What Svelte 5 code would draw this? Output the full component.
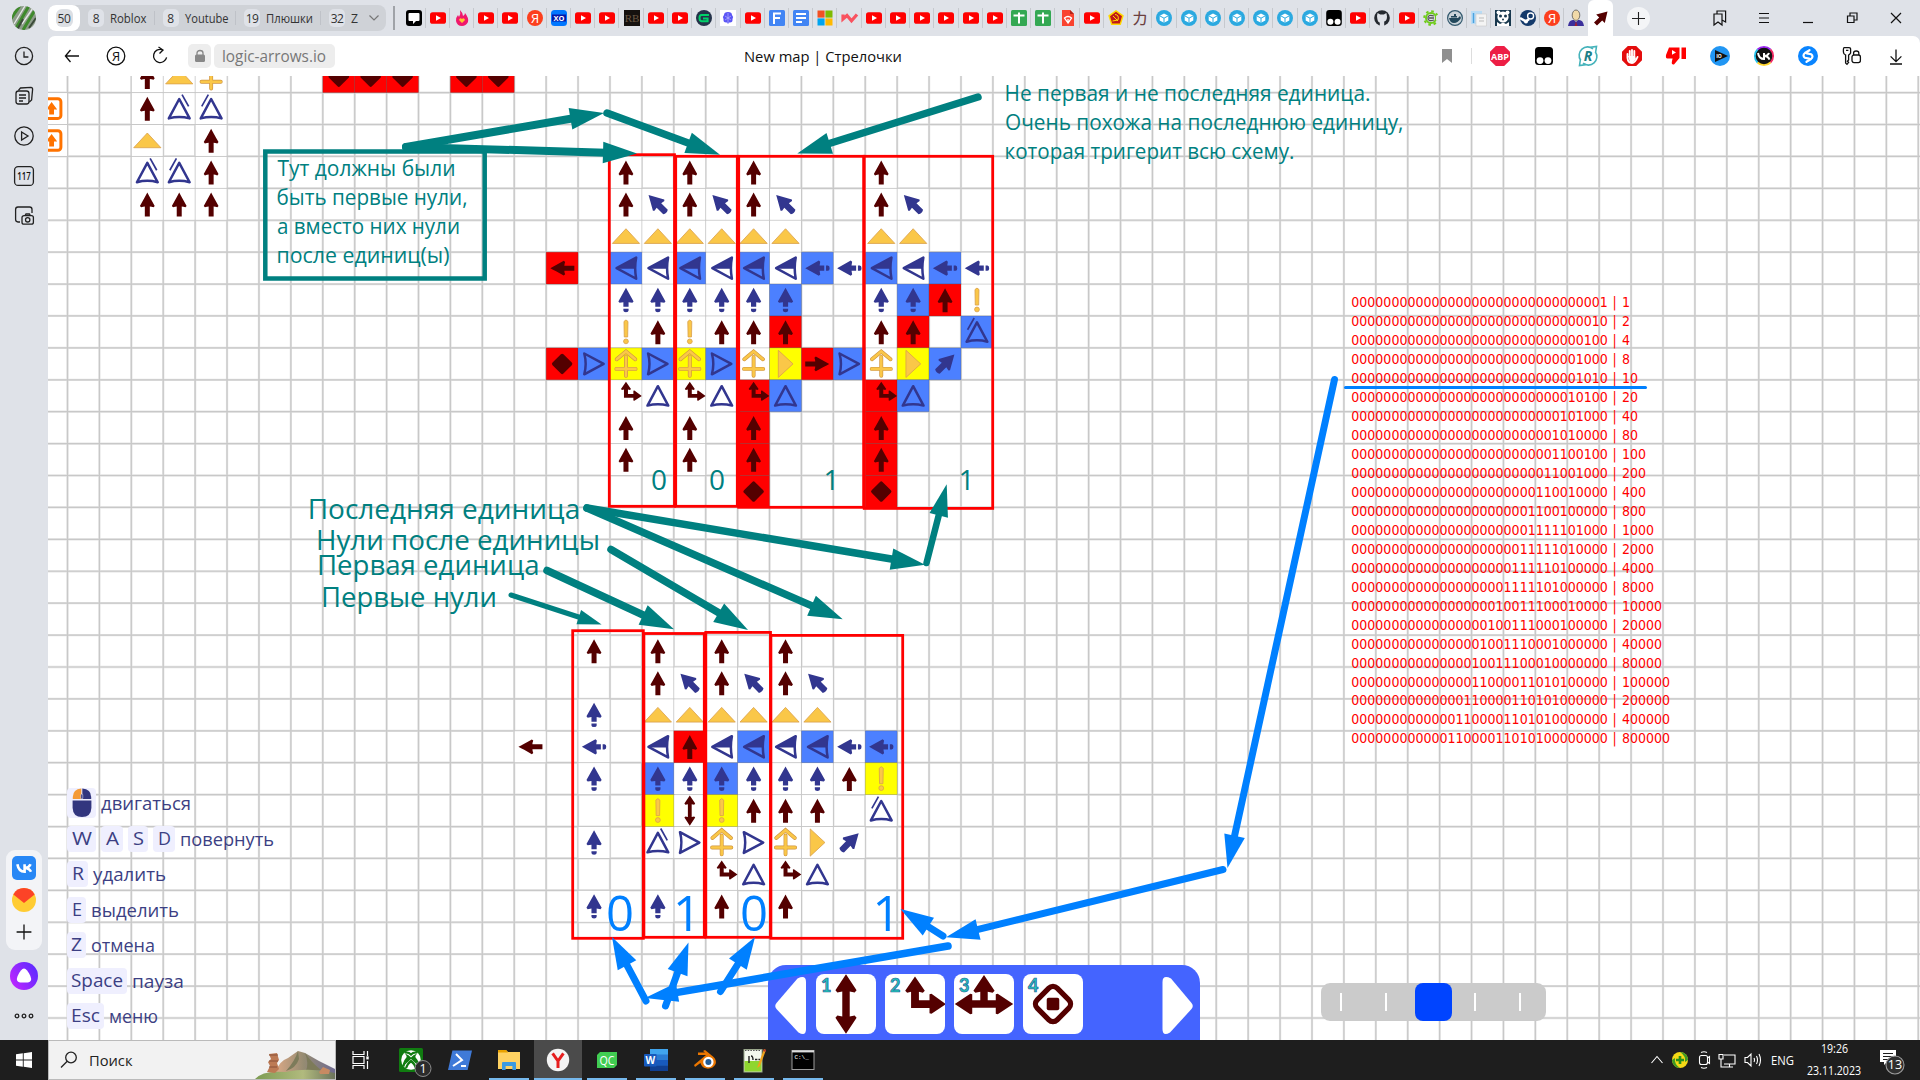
<script>
  const X0 = 67.5, Y0 = 92.6, P = 31.91;
  const cols = Array.from({ length: 60 }, (_, i) => X0 + (i - 1) * P).filter((x) => x > 48 && x < 1920);
  const rows = Array.from({ length: 32 }, (_, i) => Y0 + i * P).filter((y) => y < 1040);

  // Board rows: "column:symbol". Prefix r/b/y colours the cell background.
  const board = {
    '-1': '2:up 3:tri 4:cross 8:r.dia 9:r.dia 10:r.dia 12:r.dia 13:r.dia',
    0: '-1:box 2:up 3:slR 4:slL',
    1: '-1:box 2:tri 4:up',
    2: '2:slR 3:slL 4:up 17:up 19:up 21:up 25:up',
    3: '2:up 3:up 4:up 17:up 18:nw 19:up 20:nw 21:up 22:nw 25:up 26:nw',
    4: '17:tri 18:tri 19:tri 20:tri 21:tri 22:tri 25:tri 26:tri',
    5: '15:r.left 17:b.half 18:half 19:b.half 20:half 21:b.half 22:half 23:b.dleft 24:dleft 25:b.half 26:half 27:b.dleft 28:dleft',
    6: '17:dup 18:dup 19:dup 20:dup 21:dup 22:b.dup 25:dup 26:b.dup 27:r.up 28:excl',
    7: '17:excl 18:up 19:excl 20:up 21:up 22:r.up 25:up 26:r.up 28:b.slL',
    8: '15:r.dia 16:b.outR 17:y.cross 18:b.outR 19:y.cross 20:b.outR 21:cross 22:y.triR 23:r.right 24:b.outR 25:cross 26:y.triR 27:b.ne',
    9: '17:split 18:out 19:split 20:out 21:r.split 22:b.out 25:r.split 26:b.out',
    10: '17:up 19:up 21:r.up 25:r.up',
    11: '17:up 19:up 21:r.up 25:r.up',
    12: '21:r.dia 25:r.dia',
    17: '16:up 18:up 20:up 22:up',
    18: '18:up 19:nw 20:up 21:nw 22:up 23:nw',
    19: '16:dup 18:tri 19:tri 20:tri 21:tri 22:tri 23:tri',
    20: '14:left 16:dleft 18:half 19:r.up 20:half 21:b.half 22:half 23:b.half 24:dleft 25:b.dleft',
    21: '16:dup 18:b.dup 19:dup 20:b.dup 21:dup 22:dup 23:dup 24:up 25:y.excl',
    22: '18:y.excl 19:updown 20:y.excl 21:up 22:up 23:up 25:slL',
    23: '16:dup 18:slR 19:outR 20:cross 21:outR 22:cross 23:triR 24:ne',
    24: '20:split 21:out 22:split 23:out',
    25: '16:dup 18:dup 20:up 22:up'
  };
  const bg = { r: '#ff0000', b: '#4c80ff', y: '#ffff00' };
  const cells = Object.entries(board).flatMap(([r, s]) =>
    s.split(' ').map((e) => {
      const [c, k] = e.split(':');
      const [a, b] = k.split('.');
      return { x: X0 + +c * P, y: Y0 + +r * P, sym: b ?? a, bg: b ? bg[a] : null };
    })
  );

  const frames = [
    [609.3, 154.7, 674.5, 506.3], [675.7, 156.3, 737.3, 506.3], [738.7, 156.3, 863.7, 507.3], [864.2, 156.3, 992.7, 508.4],
    [572.7, 630.7, 643.3, 938.3], [643.9, 633.5, 704.3, 937.3], [705.8, 632.4, 770.5, 937.3], [770.9, 635.4, 902.7, 938.3]
  ];

  function arrow(x1, y1, x2, y2, w, color, len = 34, half = 10.8) {
    const d = Math.hypot(x2 - x1, y2 - y1);
    const ux = (x2 - x1) / d, uy = (y2 - y1) / d;
    const bx = x2 - ux * len, by = y2 - uy * len;
    return {
      x1, y1, x2: bx + ux * 3, y2: by + uy * 3, w, color,
      head: `${x2},${y2} ${bx - uy * half},${by + ux * half} ${bx + uy * half},${by - ux * half}`
    };
  }
  const T = '#008080', B = '#0080ff';
  const arrows = [
    arrow(406, 147, 604, 113, 8, T), arrow(406, 147, 637, 153.5, 8, T), arrow(607, 113, 720, 154.7, 7.5, T),
    arrow(978, 97, 797.3, 153.5, 7.5, T), arrow(587, 508, 925, 564.7, 7.5, T), arrow(587, 508, 842.7, 619.3, 7.5, T),
    arrow(611, 549.5, 748, 630, 7.5, T), arrow(547, 570.5, 674, 629.3, 7.5, T), arrow(511, 595, 601.6, 624.5, 5, T, 24, 7.5),
    arrow(926.5, 563, 946.7, 484.3, 6.5, T, 32, 9.5)
  ];
  const blueArrows = [
    arrow(1334.5, 379.5, 1227.5, 868, 7, B, 33, 10.5), arrow(1223, 869.5, 946, 937.3, 7, B, 33, 10.5),
    arrow(943, 936, 900.5, 909, 7, B, 33, 10.5), arrow(948, 946, 645, 998, 7.5, B, 33, 9.5),
    arrow(646, 1001, 612, 937, 7, B, 32, 10.5), arrow(665.5, 1006, 688.5, 942.5, 7, B, 32, 10.5),
    arrow(720.5, 991.5, 755, 937, 7, B, 32, 10.5)
  ];

  const notes = [
    ['Тут должны были', 277.5, 176, 178, 21], ['быть первые нули,', 276.5, 204.8, 191, 21],
    ['а вместо них нули', 277, 233.8, 183, 21], ['после единиц(ы)', 276.5, 262.6, 173, 21],
    ['Не первая и не последняя единица.', 1004.5, 101, 366, 21], ['Очень похожа на последнюю единицу,', 1005, 129.5, 398.5, 21],
    ['которая тригерит всю схему.', 1004.5, 158.5, 290, 21],
    ['Последняя единица', 307.7, 518.7, 272.5, 27.5], ['Нули после единицы', 316, 549.7, 284, 27.5],
    ['Первая единица', 317, 574.5, 222.5, 27.5], ['Первые нули', 321, 606.5, 176, 27.5]
  ];
  const digits = [
    ['0', 651, 489.7, 28, T], ['0', 709, 489.7, 28, T], ['1', 823.5, 489.7, 28, T], ['1', 958.5, 489.7, 28, T],
    ['0', 606, 930.5, 49, B], ['1', 673, 930.5, 49, B], ['0', 740, 930.5, 49, B], ['1', 872.5, 930.5, 49, B]
  ];

  const values = [1, 2, 4, 8, 10, 20, 40, 80, 100, 200, 400, 800, 1000, 2000, 4000, 8000, 10000, 20000, 40000, 80000, 100000, 200000, 400000, 800000];
  const binary = values.map((v) => ({ v, bits: v.toString(2).padStart(32, '0') }));

  const hints = [
    { h: 30, keys: [['', 29]], label: 'двигаться', w: 90 },
    { h: 26, keys: [['W', 29, 20], ['A', 22, 13], ['S', 20, 11], ['D', 22, 13]], label: 'повернуть', w: 94 },
    { h: 26, keys: [['R', 21, 12]], label: 'удалить', w: 73 },
    { h: 26, keys: [['E', 19, 10]], label: 'выделить', w: 88 },
    { h: 26, keys: [['Z', 19, 11]], label: 'отмена', w: 64 },
    { h: 26, keys: [['Space', 60, 52]], label: 'пауза', w: 52 },
    { h: 26, keys: [['Esc', 37, 29]], label: 'меню', w: 49 }
  ];

  const favicons = ('chat yt fire yt yt ya xo yt yt rb yt yt g brain yt forms docs ms zig yt yt yt yt yt yt sheet sheet pdf yt ussr kanji ' +
    'cube cube cube cube cube cube cube tm yt gh yt cc dock page panda steam ya man arrow').split(' ');
  const groups = [['8', 'Roblox', 36.5], ['8', 'Youtube', 43.5], ['19', 'Плюшки', 47], ['32', 'Z', 7]];
  const extensions = ['abp', 'tm', 'rr', 'hand', 'dislike', 'play', 'vk', 'shazam', 'keys', 'down'];
  const slots = ['updown', 'split', 'tsplit', 'source'];
  const apps = ['view', 'xbox', 'ps', 'folder', 'ybro', 'qc', 'word', 'blender', 'npp', 'cmd'];
</script>

{#snippet fit(t, w, size, h, base)}
  <svg class="fit" width={w} height={h}><text x="0" y={base} font-size={size} textLength={w} lengthAdjust="spacingAndGlyphs">{t}</text></svg>
{/snippet}

{#snippet sym(k)}
  {#if k === 'up' || k === 'left' || k === 'right'}
    <path class="dk" transform={k === 'left' ? 'rotate(-90)' : k === 'right' ? 'rotate(90)' : ''} d="M0-11.8Q2.5-7 7.4 1.6L6.2 3Q4 2.2 2.5 2.2V12.2H-2.5V2.2Q-4 2.2-6.2 3L-7.4 1.6Q-2.5-7 0-11.8Z" />
  {:else if k === 'dup' || k === 'dleft'}
    <path class="nv" transform={k === 'dleft' ? 'rotate(-90)' : ''} d="M0-12.2L7.6 1.4L6.4 2.8L2.6 2.2V6.8H-2.6V2.2L-6.4 2.8L-7.6 1.4ZM-2.6 8.6H2.6V10.5Q2.6 12.2 0 12.2T-2.6 10.5Z" />
  {:else if k === 'nw' || k === 'ne'}
    <path class="nv" transform={k === 'nw' ? 'rotate(-45)' : 'rotate(45)'} d="M0-13.2L8 1L7 2.2L3.2 1.5V10.8Q0 12.8-3.200 10.8V1.5L-7 2.2L-8 1Z" />
  {:else if k === 'tri'}
    <path class="yl" d="M0-7.5L13.6 7.2H-13.6Z" />
  {:else if k === 'triR'}
    <path class="yl" transform="rotate(90)" d="M0-7.500L13.600 7.200H-13.600Z" />
  {:else if k === 'half'}
    <path class="ol" d="M-9.400 0L10.200-10.600Q8.200 0 10.200 10.600Z" /><path class="nv" d="M-9.400 .6L10.200-10.600Q8.800-5 8.800 .6Z" />
  {:else if k === 'out' || k === 'outR' || k === 'slL' || k === 'slR'}
    <path class="ol" transform={k === 'outR' ? 'rotate(90)' : ''} d="M0-9.600L10.400 9.800Q0 7-10.400 9.800Z" />
    {#if k === 'slL'}<path class="ol slash" d="M-2.800-14L-9.400-2.200" />{/if}
    {#if k === 'slR'}<path class="ol slash" d="M2.800-14L9.400-2.200" />{/if}
  {:else if k === 'excl'}
    <path class="yl" d="M-2-10.500Q0-13.500 2-10.500L1.700 5H-1.700Z" /><circle class="yl" cy="9.400" r="2.400" />
  {:else if k === 'cross'}
    <path class="ybd" d="M-9.300-4.600L0-12.400L9.300-4.600M0-7V11.800M-9.600 5H9.600" /><path class="yin" d="M-9.300-4.600L0-12.400L9.300-4.600M0-7V11.800M-9.600 5H9.600" />
  {:else if k === 'split'}
    <path class="dk" d="M0-14L5-6.800L4-5.800L2-6.200V-1.900H7.400V-5L8.400-5.200L15.800 .1L8.400 5L7.400 4.700V2H-2V-6.200L-4-5.800L-5-6.800Z" />
  {:else if k === 'updown'}
    <path class="dk" d="M0-15.200L5.400-7L4.400-5.900L1.900-6.400V6.400L4.400 5.900L5.400 7L0 15.200L-5.400 7L-4.400 5.900L-1.900 6.400V-6.400L-4.400-5.900L-5.400-7Z" />
  {:else if k === 'tsplit'}
    <path class="dk" d="M0-14.800L5.400-6.800L4.400-5.700L1.900-6.200V-1.900H6V-5L7-5.200L14.900 0L7 5.200L6 5V1.900H-6V5L-7 5.200L-14.900 0L-7-5.200L-6-5V-1.900H-1.900V-6.200L-4.400-5.700L-5.400-6.800Z" />
  {:else if k === 'source'}
    <rect class="ring" x="-7.200" y="-7.200" width="14.400" height="14.400" rx="3" transform="rotate(45)" /><rect class="dk" x="-3.200" y="-3.200" width="6.400" height="6.400" rx="1" />
  {:else if k === 'dia'}
    <rect class="dk" x="-7.700" y="-7.700" width="15.400" height="15.400" rx="1.800" transform="rotate(45)" />
  {:else if k === 'box'}
    <rect x="-9.300" y="-9.800" width="18.600" height="19.600" rx="3" fill="#fff" stroke="#ff7300" stroke-width="3" /><path d="M0-6.500L5.600 1H2.400V6H-2.400V1H-5.600Z" fill="#ff7300" />
  {/if}
{/snippet}

{#snippet fav(k)}
  {#if k === 'yt'}
    <rect x="-8" y="-5.800" width="16" height="11.600" rx="2.600" fill="#f00" /><path d="M-2-2.800L3 0L-2 2.800Z" fill="#fff" />
  {:else if k === 'chat'}
    <rect x="-8" y="-8" width="16" height="16" rx="3" fill="#000" /><path d="M-4.500-5H4.500Q5.500-5 5.500-4V2Q5.500 3 4.500 3H2L-1 6V3H-4.500Q-5.500 3-5.500 2V-4Q-5.500-5-4.500-5Z" fill="#fff" />
  {:else if k === 'fire'}
    <path d="M-2-8Q1-5 1-2Q3-3 3-5Q7 0 6 4Q4 8 0 8Q-5 8-6 3Q-6-1-4-3L-3-1Q-1-4-2-8Z" fill="#f0186c" /><path d="M0 5L-3 2Q-2-1 0 1Q2-1 3 2Z" fill="#ffc62e" />
  {:else if k === 'ya'}
    <circle r="8" fill="#fc3f1d" /><text y="5" class="g w" font-size="13">Я</text>
  {:else if k === 'xo'}
    <rect x="-8" y="-8" width="16" height="16" rx="3.500" fill="#0077ff" /><rect x="-7" y="-3.500" width="14" height="7" fill="#0618a8" /><text y="2.800" class="g w b" font-size="7.500">XO</text>
  {:else if k === 'rb'}
    <rect x="-8" y="-8" width="16" height="16" fill="#15110f" /><text y="4" class="serif" font-size="11" fill="#6b5844">RB</text>
  {:else if k === 'g'}
    <circle r="8" fill="#25334a" /><path d="M5-3H-2.500Q-4.500-3-4.500 0T-2.500 3.200H3.600V.4H-1" fill="none" stroke="#00d26a" stroke-width="2" />
  {:else if k === 'brain'}
    <rect x="-8" y="-8" width="16" height="16" fill="#fff" /><path d="M0-6Q4-6 4-3Q6-1 4.500 1Q5 5 1 4.500L0 6L-1 4.500Q-5 5-4.500 1Q-6-1-4-3Q-4-6 0-6Z" fill="#5b55f5" /><path d="M0-5V5M-3-2L3 2M3-2L-3 2" stroke="#b7b4ff" stroke-width=".7" />
  {:else if k === 'forms' || k === 'docs'}
    <rect x="-8" y="-8" width="16" height="16" rx="1.500" fill="#4285f4" />
    {#if k === 'forms'}<path d="M-3 6V-4.500H4M-3 0H3" fill="none" stroke="#fff" stroke-width="2" />{:else}<path d="M-5-4H5M-5 0H5M-5 4H1" stroke="#fff" stroke-width="1.800" />{/if}
  {:else if k === 'ms'}
    <path d="M-7.500-7.500H-.4V-.4H-7.500Z" fill="#f25022" /><path d="M.4-7.500H7.500V-.4H.4Z" fill="#7fba00" /><path d="M-7.500 .4H-.4V7.500H-7.500Z" fill="#00a4ef" /><path d="M.4 .4H7.500V7.500H.4Z" fill="#ffb900" />
  {:else if k === 'zig'}
    <path d="M-7-3.500V1L-3-2.500L1.500 2.800L7-3.500" fill="none" stroke="#f9525f" stroke-width="3.200" />
  {:else if k === 'sheet'}
    <rect x="-8" y="-8" width="16" height="16" rx="1.500" fill="#34a853" /><path d="M-5.500-2.500H5.500M0-5.500V5.500" stroke="#fff" stroke-width="2" />
  {:else if k === 'pdf'}
    <path d="M-6-8H2L6-4V8H-6Z" fill="#f9432f" /><path d="M2-8L6-4H2Z" fill="#b32316" /><path d="M0 5L-3.500 0Q0-3 3.500 0ZM0 5V1" fill="none" stroke="#fff" stroke-width="1.300" />
  {:else if k === 'ussr'}
    <path d="M0-8L7.800-2.400L4.800 7H-4.800L-7.800-2.400Z" fill="#ffd800" /><path d="M0-6.300L6-1.800L3.800 5.400H-3.800L-6-1.800Z" fill="#c01818" /><path d="M-1-3.500Q3.500-3 2 2L-3.500 3M-3-2L2 3" fill="none" stroke="#ffd800" />
  {:else if k === 'kanji'}
    <text y="6.500" class="cjk" font-size="17" fill="#6b4040">カ</text>
  {:else if k === 'cube'}
    <circle r="8" fill="#2ba9e0" /><path d="M0-4.600L4.300-2.200V2.400L0 4.800L-4.300 2.400V-2.200Z" fill="#fff" /><path d="M-4.300-2.200L0 .2L4.300-2.200M0 .2V4.800" stroke="#2ba9e0" fill="none" />
  {:else if k === 'tm'}
    <rect x="-7.800" y="-8" width="15.600" height="16" rx="3" fill="#000" /><circle cx="-3.600" cy="3.800" r="3" fill="#fff" /><circle cx="3.600" cy="3.800" r="3" fill="#fff" />
  {:else if k === 'gh'}
    <circle r="7.800" fill="#24292f" /><path d="M-2.200 8V4.500Q-4.500 5-5-2L-4.400-5L-1.800-3.600H1.800L4.400-5L5-1.500Q5 3 2.200 3.400V8Z" fill="#dfe2e8" />
  {:else if k === 'cc'}
    <circle r="5" fill="none" stroke="#6fcb1b" stroke-width="2" /><circle r="6.800" fill="none" stroke="#6fcb1b" stroke-width="2" stroke-dasharray="2.600 2.740" /><path d="M5-2L8-4V4L5 2Z" fill="#dfe2e8" /><path d="M3-2Q-3-4-3 0T3 2M-2 0H3" fill="none" stroke="#555" stroke-width="1.300" />
  {:else if k === 'dock'}
    <circle r="7.400" fill="#c9d3d9" stroke="#33596e" stroke-width="1.200" /><path d="M-6 0H3L5-2L6 0Q3 5-1 5Q-5 5-6 0ZM-4-2H2V-.6H-4ZM-1-4H1V-2H-1Z" fill="#22485c" />
  {:else if k === 'page'}
    <path d="M-8-7H3V6H-8Z" fill="#b9dcf5" /><path d="M-3-4H7.500V8H-3Z" fill="#f4f4f4" stroke="#c9c9c9" stroke-width=".6" /><path d="M-5.500-5V5" stroke="#4aa3e0" stroke-width="1.500" /><path d="M0 0H5M0 3H5" stroke="#bbb" />
  {:else if k === 'panda'}
    <rect x="-8" y="-8" width="16" height="16" fill="#18384e" /><circle cx="-4.500" cy="-5.500" r="2" fill="#fff" /><circle cx="4.500" cy="-5.500" r="2" fill="#fff" /><circle r="5.600" cy="-1" fill="#fff" /><circle cx="-2.500" cy="-2" r="1.500" fill="#18384e" /><circle cx="2.500" cy="-2" r="1.500" fill="#18384e" /><circle cy="1.400" r="1" fill="#18384e" /><path d="M-6 8V4L-3 6L0 4.500L3 6L6 4V8Z" fill="#fff" />
  {:else if k === 'steam'}
    <circle r="8" fill="#143a6b" /><circle cx="2.600" cy="-2" r="3" fill="none" stroke="#fff" stroke-width="1.400" /><path d="M-8 0L-2 3.500L1 1" stroke="#fff" stroke-width="2.600" fill="none" /><circle cx="-2" cy="3.600" r="2" fill="#fff" />
  {:else if k === 'man'}
    <path d="M-8 8Q-7 1-2 2L0 4L2 2Q7 1 8 8Z" fill="#3b2f9b" /><ellipse cy="-2.800" rx="3.800" ry="5.200" fill="#f0d9a8" stroke="#444" stroke-width=".7" /><path d="M0 3L1.400 8H-1.400Z" fill="#a02030" />
  {:else if k === 'arrow'}
    <path d="M6.500-6.500L3.800 5L1.200 2.400L-4 7.400L-7 4.400L-1.800-.6L-4.800-3.400Z" fill="#540000" />
  {/if}
{/snippet}

{#snippet ext(k)}
  {#if k === 'abp'}
    <path d="M-4.200-10H4.200L10-4.200V4.200L4.200 10H-4.200L-10 4.200V-4.200Z" fill="#ed1e45" /><text y="3.700" class="g w b" font-size="9.500" textLength="18" lengthAdjust="spacingAndGlyphs">ABP</text>
  {:else if k === 'tm'}
    <rect x="-9" y="-9" width="18" height="18" rx="3.500" fill="#000" /><circle cx="-4" cy="4.600" r="3.400" fill="#fff" /><circle cx="4" cy="4.600" r="3.400" fill="#fff" />
  {:else if k === 'rr'}
    <path d="M-7.500 4A8.500 8.500 0 0 1 5-7.200M7.500-4A8.500 8.500 0 0 1-5 7.200M2-8.600L8.500-9.500L7.500-3M-2 8.600L-8.500 9.500L-7.500 3" fill="none" stroke="#46b3bb" stroke-width="1.600" /><text y="5" class="g b it" font-size="14" fill="#1d7f87">R</text>
  {:else if k === 'hand'}
    <path d="M-4.200-10H4.200L10-4.200V4.200L4.200 10H-4.200L-10 4.200V-4.200Z" fill="#e40d0d" /><path d="M-4.500-2V2Q-4 7 0 7Q3 7 5.500 1M-2.200 1V-5M0 1V-6M2.300 1V-5" stroke="#fff" stroke-width="1.900" stroke-linecap="round" fill="none" /><path d="M-4 0H3L4 3L1 6.500H-2Z" fill="#fff" />
  {:else if k === 'dislike'}
    <path d="M-7-8.500H3.500V2L-2 8.500Q-5 9-4 5L-3.400 2.600H-8.600Q-10.500 2.600-10-1ZM5.500-8.500H10V3H5.500Z" fill="#f00" /><path d="M-4-6L0-3.600L-4-1.200Z" fill="#fff" />
  {:else if k === 'play'}
    <circle r="10" fill="#2196f3" /><path d="M-5-6L8 0L-5 6Z" fill="#111" /><text x="-1" y="2" class="g w b" font-size="5">IO</text>
  {:else if k === 'vk'}
    <circle r="9" fill="#111" /><path d="M-6.500-6.500A9.200 9.200 0 0 1 6.500-6.500" stroke="#9b27f0" stroke-width="1.800" fill="none" /><path d="M6.500-6.500A9.200 9.200 0 0 1 6.500 6.500" stroke="#f02a63" stroke-width="1.800" fill="none" /><path d="M6.500 6.500A9.200 9.200 0 0 1-6.500 6.500" stroke="#ffd52e" stroke-width="1.800" fill="none" /><path d="M-6.500 6.500A9.200 9.200 0 0 1-6.500-6.500" stroke="#25c1ea" stroke-width="1.800" fill="none" /><path d="M-6-3Q-5 3 0 3V-3M0 0Q4 0 5-3M0 0Q4 0 5.500 3.600" stroke="#fff" stroke-width="2" fill="none" />
  {:else if k === 'shazam'}
    <circle r="10" fill="#0a85ff" /><path d="M1.500-5.800L-3-3Q-6-.5-3 1.800L1.200 2.600M-1.500 5.800L3 3Q6 .5 3-1.800L-1.200-2.600" stroke="#fff" stroke-width="2.200" fill="none" stroke-linecap="round" />
  {:else if k === 'keys'}
    <g class="ln"><path d="M-7.600-8.400H-3Q-1.400-8.400-1.400-6.600V-3Q-2.200-1.400-3.400-1V4L-4.600 5.200L-3.400 6.400L-5 8.400L-6.400 7V-1Q-8.600-2-8.600-4V-6.600Q-8.600-8.400-7.600-8.400ZM-6-5.600H-3.600" /><rect x="0" y="-1" width="8.400" height="7.600" rx="2" /><path d="M1.600-1V-3Q1.600-5 4.200-5T6.800-3V-1" /></g>
  {:else}
    <path class="ln" d="M0-6.500V5.400M-5.400 .4L0 5.600L5.400 .4M-6 8H6" />
  {/if}
{/snippet}

{#snippet app(k)}
  {#if k === 'view'}
    <path d="M-7-9V-5.500H4V-9M-7 9V5.500H4V9M-7-3.500H4V3.500H-7ZM7.500-9V-4M7.500 1V9" fill="none" stroke="#fff" stroke-width="1.200" /><rect x="6.300" y="-3.600" width="2.400" height="3" fill="#fff" />
  {:else if k === 'xbox'}
    <rect x="-12" y="-12" width="24" height="24" rx="1.500" fill="#107c10" /><circle r="9.800" fill="#fff" /><path d="M-6.500-7.500Q-2-8 0-5.500Q2-8 6.500-7.500M-7.600 6.500Q-6-1-2.500-2.500M7.600 6.500Q6-1 2.500-2.500M-5 8.200Q-3 3 0 1Q3 3 5 8.200" stroke="#107c10" stroke-width="2.200" fill="none" /><path d="M-6-6.500Q-2-5 0-2.500Q2-5 6-6.500Q2-2.500 7.500 6L0-1L-7.500 6Q-2-2.500-6-6.500Z" fill="#107c10" />
    <circle cx="12" cy="8.500" r="8" fill="#2b2b2b" stroke="#8c8c8c" stroke-width="1" /><text x="12" y="13" class="g w" font-size="12.500">1</text>
  {:else if k === 'ps'}
    <path d="M-7.600-9.500H12L7.600 10H-12Z" fill="#3f7ad8" /><path d="M-4-6L2 0L-7 6M1 6H6" fill="none" stroke="#fff" stroke-width="2" />
  {:else if k === 'folder'}
    <path d="M-11-10H-3L-1-8H11V9H-11Z" fill="#ffd262" /><path d="M-11-10H-3L-1-7.600H-11Z" fill="#e9a200" /><path d="M-7 10V3Q-7 2-6 2H6Q7 2 7 3V10H3.400V6H-3.400V10Z" fill="#3b9ae0" />
  {:else if k === 'ybro'}
    <circle r="11.200" fill="#f4f4f4" /><path d="M-5.400-6.600L0 1L5.400-6.600M0 0V8" fill="none" stroke="#e61e1e" stroke-width="3" />
  {:else if k === 'qc'}
    <path d="M-7-8H10V5L7 8H-10V-5Z" fill="#41cd52" /><text y="4.600" class="g w" font-size="12" textLength="15" lengthAdjust="spacingAndGlyphs">QC</text>
  {:else if k === 'word'}
    <rect x="-6" y="-11" width="18" height="22" rx="1.500" fill="#2b7cd3" /><path d="M-6-11H12V-5.500H-6Z" fill="#41a5ee" /><path d="M-6 0H12V5.500H-6Z" fill="#185abd" /><path d="M-6 5.500H12V11H-6Z" fill="#103f91" /><rect x="-12" y="-6" width="12.600" height="12.600" rx="1" fill="#185abd" /><text x="-5.700" y="4.200" class="g w b" font-size="10">W</text>
  {:else if k === 'blender'}
    <path d="M-11 5L1-5H-7V-7.400H0L-2-9L0-10L8-3.600Q12 0 10.600 4Q8 9 2 8.600Q-3 8-4.600 3L-10 7Z" fill="#ea7600" /><circle cx="3.400" cy="2" r="5.200" fill="#fff" /><circle cx="3.400" cy="2" r="3" fill="#235d96" />
  {:else if k === 'npp'}
    <rect x="-10" y="-10.500" width="18" height="22.500" fill="#f4f8ee" stroke="#9aa78c" /><path d="M-9.500 1H7.500V11.500H-9.500Z" fill="#8fd62f" /><path d="M-9-9.500H7" stroke="#555" stroke-dasharray="1.500 1.200" /><path d="M-5-4V3M-3-4Q-1-4-1 0M1-.5H3.400M4.400-.5H6" stroke="#222" stroke-width="1.400" fill="none" /><path d="M10-11L4 5L3 8L6 6L12-10Z" fill="#f0a31c" /><path d="M10-11L9.300-9L11.400-8L12-10Z" fill="#b8342a" />
  {:else}
    <rect x="-11" y="-9.500" width="22" height="19" fill="#000" stroke="#9c9c9c" /><path d="M-11-8.600H11" stroke="#ddd" stroke-width="2" /><text x="-8.600" y="-.6" class="mono w" font-size="6">C:\_</text>
  {/if}
{/snippet}

<div class="shell">
  <header class="tabs">
    <div class="avatar"><svg width="24" height="24" viewBox="0 0 24 24"><clipPath id="av"><circle cx="12" cy="12" r="12" /></clipPath><g clip-path="url(#av)"><rect width="24" height="24" fill="#8e9c8a" /><path d="M-2 14L9-2M3 24L18-2M11 24L23 4" stroke="#3f8a2c" stroke-width="3" /><path d="M2 18L13 0M10 18L21 2" stroke="#e4e8e6" stroke-width="1.400" /><path d="M5 24L11 13M17 22L24 12" stroke="#3b4a39" stroke-width="2" /></g></svg></div>
    <div class="groups">
      <div class="count active"><span>50</span></div>
      {#each groups as [n, name, w], i}
        <div class="group" class:last={i === groups.length - 1}><span class="badge">{n}</span>{@render fit(name, w, 12.500, 18, 14)}</div>
      {/each}
      <svg class="chev" width="12" height="8"><path d="M1.500 1.500L6 6L10.500 1.500" fill="none" stroke="#777" stroke-width="1.200" /></svg>
    </div>
    <i class="bar"></i>
    <div class="favs">
      {#each favicons as f, i}
        <div class="fav" class:on={i === favicons.length - 1} class:sep={i < favicons.length - 2}><svg width="20" height="20" viewBox="-10 -10 20 20">{@render fav(f)}</svg></div>
      {/each}
    </div>
    <div class="newtab"><svg width="15" height="15"><path d="M7.500 1V14M1 7.500H14" stroke="#222" stroke-width="1.100" /></svg></div>
    <div class="win">
      <svg viewBox="-10 -10 20 20"><path d="M-6-4H2V7L-2 4L-6 7ZM-3-4V-7H5.600V4L2 2" /></svg>
      <svg viewBox="-10 -10 20 20"><path d="M-5-4.500H5M-5 0H5M-5 4.500H5" /></svg>
      <svg viewBox="-10 -10 20 20"><path d="M-5 4.500H5" /></svg>
      <svg viewBox="-10 -10 20 20"><path d="M-4.500-2H2V4.500H-4.500ZM-2-2V-5H5V2H2" /></svg>
      <svg viewBox="-10 -10 20 20"><path d="M-5-5L5 5M5-5L-5 5" /></svg>
    </div>
  </header>

  <aside class="side">
    <svg viewBox="-12 -12 24 24"><circle r="8.600" /><path d="M0-4.600V1H4.400" /></svg>
    <svg viewBox="-12 -12 24 24"><rect x="-8" y="-5" width="13" height="13" rx="2.500" /><path d="M-5-1H2M-5 2H2M-5 5H-1M-5.600-5.600L-3.500-8L7-8.600Q8.600-8.600 8.600-6.600L7.600 4L5.400 6" /></svg>
    <svg viewBox="-12 -12 24 24"><circle r="9.200" /><path d="M-2.400-4L4 0L-2.400 4Z" /></svg>
    <svg viewBox="-12 -12 24 24"><rect x="-9.400" y="-9.400" width="18.800" height="18.800" rx="3.500" /><text class="n117" y="4.300" textLength="13.500" lengthAdjust="spacingAndGlyphs">117</text></svg>
    <svg viewBox="-12 -12 24 24"><path d="M-4 6H-6Q-8.400 6-8.400 3.600V-6.600Q-8.400-9-6-9H5.600Q8-9 8-6.600V-3" /><rect x="-2" y="-.4" width="11.400" height="8.600" rx="2" /><path d="M1-.4L2-2H5.400L6.400-.4" /><circle cx="3.700" cy="3.800" r="2.200" /></svg>
    <div class="dock">
      <svg width="24" height="24" viewBox="0 0 24 24"><rect width="24" height="24" rx="5" fill="#2787f5" /><path d="M5.400 8.200Q6.600 15.600 12.600 15.600V8.200M12.800 12Q17 11.600 18.600 8.200M12.800 12Q17.400 12.400 19 15.800" fill="none" stroke="#fff" stroke-width="2.600" /></svg>
      <svg width="24" height="24" viewBox="0 0 24 24"><circle cx="12" cy="12" r="12" fill="#ffcc33" /><path d="M1.400 6.400A12 12 0 0 1 22.600 6.400L12 15Z" fill="#fc4327" /></svg>
      <svg width="24" height="24" viewBox="0 0 24 24"><path d="M12 4.600V19.400M4.600 12H19.400" stroke="#111" stroke-width="1.300" /></svg>
    </div>
    <svg class="alice" viewBox="0 0 28 28"><defs><linearGradient id="al" x1="0" x2="1" y1=".8" y2=".2"><stop offset="0" stop-color="#c026ff" /><stop offset="1" stop-color="#5a2bff" /></linearGradient></defs><circle cx="14" cy="14" r="14" fill="url(#al)" /><path d="M14 6.600Q17 7 20.400 14Q22.600 20 18 20.400H10Q5.400 20 7.600 14Q11 7 14 6.600Z" fill="#fff" /></svg>
    <svg class="dots" viewBox="-12 -6 24 12"><circle cx="-7" r="1.800" /><circle r="1.800" /><circle cx="7" r="1.800" /></svg>
  </aside>

  <main>
    <div class="toolbar">
      <div class="nav">
        <svg viewBox="-12 -12 24 24"><path d="M7 0H-6M-1.500-6L-6.600 0L-1.500 6" /></svg>
        <svg viewBox="-12 -12 24 24"><circle r="8.800" /><text class="ya" y="5">Я</text></svg>
        <svg viewBox="-12 -12 24 24"><path d="M2-6.400A6.600 6.600 0 1 0 6.600 1.400M-1.500-9L3-6L-.5-2.500" /></svg>
      </div>
      <div class="lock"><svg width="12" height="14"><path d="M3 6V4Q3 1.500 6 1.500T9 4V6" fill="none" stroke="#888" stroke-width="1.300" /><rect x="1" y="5.500" width="10" height="7.500" rx="1.500" fill="#888" /></svg></div>
      <div class="url">{@render fit('logic-arrows.io', 104, 15.500, 22, 17)}</div>
      <div class="title">{@render fit('New map | Стрелочки', 158, 15, 22, 17)}</div>
      <svg class="mark" width="10" height="14"><path d="M0 0H10V14L5 10L0 14Z" fill="#8f8f8f" /></svg>
      <i></i>
      <div class="exts">
        {#each extensions as e}<svg viewBox="-12 -12 24 24">{@render ext(e)}</svg>{/each}
      </div>
    </div>

    <div class="canvas">
      <svg class="map" viewBox="48 76 1872 964" width="1872" height="964">
        <path class="grid soft" d={cols.map((x) => `M${x} 76V1040`).join('') + rows.map((y) => `M48 ${y}H1920`).join('')} />
        <path class="grid" d={cols.map((x) => `M${x} 76V1040`).join('') + rows.map((y) => `M48 ${y}H1920`).join('')} />
        {#each cells as c}
          {#if c.bg}
            <rect x={c.x} y={c.y} width="31.910" height="31.910" fill={c.bg} stroke="#333" stroke-opacity=".25" stroke-width=".8" />
          {:else}
            <rect x={c.x + 0.5} y={c.y + 0.5} width="30.900" height="30.900" fill="#fff" />
          {/if}
          <g class="sym" transform="translate({c.x + 16} {c.y + 16})">{@render sym(c.sym)}</g>
        {/each}
        {#each frames as [a, b, c, d]}
          <rect class="frame" x={a} y={b} width={c - a} height={d - b} />
        {/each}
        <rect x="265.300" y="151.500" width="219.400" height="127" fill="none" stroke="#008080" stroke-width="4.500" />
        {#each arrows as a}
          <line x1={a.x1} y1={a.y1} x2={a.x2} y2={a.y2} stroke={a.color} stroke-width={a.w} stroke-linecap="round" /><polygon points={a.head} fill={a.color} />
        {/each}
        {#each notes as [t, x, y, w, s]}
          <text class="note" {x} {y} font-size={s} textLength={w} lengthAdjust="spacingAndGlyphs">{t}</text>
        {/each}
        {#each digits as [t, x, y, s, f]}
          <text class="digit" {x} {y} font-size={s} fill={f}>{t}</text>
        {/each}
        {#each binary as b, i}
          <text class="bin" x="1351.300" y={306.900 + i * 18.980} textLength="256.500" lengthAdjust="spacing">{b.bits}</text>
          <text class="bin" x="1612.400" y={306.900 + i * 18.980}>|</text>
          <text class="bin" x="1622" y={306.900 + i * 18.980}>{b.v}</text>
        {/each}
        <path d="M1345.500 387.400H1645.500" stroke="#0080ff" stroke-width="3" stroke-linecap="round" />
      </svg>

      <div class="hints">
        {#each hints as h}
          <div class="hint">
            {#each h.keys as [k, w, tw]}
              <kbd style:width="{w}px" style:height="{h.h}px">
                {#if k}{@render fit(k, tw, 18.500, 26, 19.200)}{:else}<svg width="20" height="30"><path d="M.8 11V9Q1 1 9.300 .5V11Z" fill="#f49a36" /><path d="M10.300 .5Q19 1 19.200 9V11H10.300Z" fill="#32367e" /><path d="M.6 12.500H19.400V20Q19 29 10 29T.6 20Z" fill="#32367e" /><rect x="8.800" y="6" width="2" height="5" rx="1" fill="#32367e" stroke="#efeffe" stroke-width=".5" /></svg>{/if}
              </kbd>
            {/each}
            {@render fit(h.label, h.w, 18.500, 28, 20.500)}
          </div>
        {/each}
      </div>

      <div class="palette">
        <svg class="nav-l" width="32" height="60"><path d="M22.500 2.500Q31-1.500 31 6V53Q31 61 23.500 56.500L1.500 33Q-1 30 1.500 27Z" fill="#fff" /></svg>
        {#each slots as s, i}
          <div class="slot">
            <svg viewBox="-15.300 -15.300 30.600 30.600" width="60" height="60">{@render sym(s)}</svg>
            <span>{i + 1}</span>
          </div>
        {/each}
        <svg class="nav-r" width="31" height="60"><path d="M9 2.500Q.5-1.500 .5 6V53Q.5 61 8 56.500L29.500 33Q32 30 29.500 27Z" fill="#fff" /></svg>
      </div>

      <div class="speed"><i></i><i></i><b></b><i></i><i></i></div>

      <svg class="map over" viewBox="48 76 1872 964" width="1872" height="964">
        {#each blueArrows as a}
          <line x1={a.x1} y1={a.y1} x2={a.x2} y2={a.y2} stroke={a.color} stroke-width={a.w} stroke-linecap="round" /><polygon points={a.head} fill={a.color} />
        {/each}
      </svg>
    </div>
  </main>

  <footer>
    <div class="start"><svg width="16" height="16"><path d="M0 2.300L6.800 1.300V7.500H0ZM7.700 1.200L16 0V7.500H7.700ZM0 8.400H6.800V14.700L0 13.700ZM7.700 8.400H16V16L7.700 14.800Z" fill="#fff" /></svg></div>
    <div class="search">
      <svg class="glass" width="18" height="18"><circle cx="11" cy="6.500" r="5.300" fill="none" stroke="#222" stroke-width="1.300" /><path d="M7.200 10.300L1 16.500" stroke="#222" stroke-width="1.300" /></svg>
      {@render fit('Поиск', 43.500, 15, 22, 16.500)}
      <svg class="hill" width="80" height="38" viewBox="0 0 80 38">
        <defs><linearGradient id="h1" x1="0" x2="1"><stop offset="0" stop-color="#e0ab88" /><stop offset=".5" stop-color="#958b72" /><stop offset="1" stop-color="#6f6b92" /></linearGradient><linearGradient id="h2" x1="0" x2="1"><stop offset="0" stop-color="#7d9c52" /><stop offset=".6" stop-color="#b1ba7e" /><stop offset="1" stop-color="#6c745c" /></linearGradient></defs>
        <path d="M20 32Q24 20 33 17L43 10L50 12L64 20L80 28V38H18Z" fill="url(#h1)" /><path d="M43 10Q40 20 31 30Q41 27 44 18ZM50 12Q54 22 51 30L66 29Q57 22 50 12Z" fill="#7d7b5a" />
        <path d="M0 38Q8 29 30 31Q55 26 80 32V38Z" fill="url(#h2)" /><path d="M14 13L22 12L24 19L22 22L24 28L20 32L12 31L15 25L13 21L16 18Z" fill="#bd7a54" /><path d="M14 14H23M14 20H23M14 26H22" stroke="#8a5138" /><path d="M64 31L68 26L75 29L74 33H65Z" fill="#c78a62" />
      </svg>
    </div>
    <div class="apps">
      {#each apps as a, i}
        <div class="app" class:open={i > 2} class:cur={a === 'ybro'}><svg width="48" height="38" viewBox="-24 -19 48 38">{@render app(a)}</svg></div>
      {/each}
    </div>
    <div class="tray">
      <svg width="14" height="20" viewBox="-7 -10 14 20"><path d="M-5.500 3L0-3.500L5.500 3" /></svg>
      <svg width="18" height="20" viewBox="-9 -10 18 20"><circle r="8" fill="#f5d916" stroke="none" /><path d="M0-8A8 8 0 0 1 8 0L5 2Q6-4 0-8ZM0 8A8 8 0 0 1-8 0L-5-2Q-6 4 0 8Z" fill="#3d9a25" stroke="none" /><path class="plus" d="M0-4V4M-4 0H4" /></svg>
      <svg width="14" height="20" viewBox="-7 -10 14 20"><rect x="-4.500" y="-4.500" width="8" height="9" rx="2" /><path d="M3.500-2L5.500-3.500V3.500L3.500 2M-3-7.500Q0-9 3-7.500M-3 7.500Q0 9 3 7.500" /></svg>
      <svg width="18" height="20" viewBox="-9 -10 18 20"><path d="M-3-5H8V4H-3M2.500 4V7M-1 7H6M-8-5.500H-4V-1H-8ZM-6-1V7H-1" /></svg>
      <svg width="18" height="20" viewBox="-9 -10 18 20"><path d="M-8-2.500H-5.500L-2-6V6L-5.500 2.500H-8ZM1-2Q2 0 1 2M3.500-4Q5.500 0 3.500 4M6-6Q9 0 6 6" /></svg>
      <div class="lang">{@render fit('ENG', 23, 12.500, 18, 13.500)}</div>
      <div class="clock">{@render fit('19:26', 27, 12.500, 18, 13)}{@render fit('23.11.2023', 54, 12.500, 18, 12.500)}</div>
      <svg class="note-ic" width="28" height="28"><path d="M1 2H17V14H8L5 17V14H1Z" fill="#fff" stroke="none" /><path class="ink" d="M4 5.500H14M4 8.500H14M4 11.500H9" /><circle class="bub" cx="16" cy="17" r="9" /><text class="g w" x="16" y="21.300" font-size="12.500" stroke="none">13</text></svg>
    </div>
  </footer>
</div>

<style>
  :global(body) { margin: 0; overflow: hidden; }
  .shell {
    width: 1920px; height: 1080px; display: grid; overflow: hidden;
    grid-template: 36px 1fr 40px / 48px 1fr; background: #dfe2e8;
    font-family: 'Open Sans', 'Noto Sans', sans-serif;
  }
  svg { display: block; flex: none; }
  .fit { overflow: visible; fill: currentColor; }
  .tabs { grid-column: 1 / 3; display: flex; align-items: center; position: relative; }
  .avatar { width: 48px; display: flex; justify-content: center; }
  .groups { display: flex; align-items: center; width: 338px; height: 26px; background: #cfd2d7; border-radius: 8px; color: #333; }
  .count { width: 32px; height: 26px; border-radius: 8px; background: #fff; display: grid; place-items: center; font-size: 12px; letter-spacing: -0.4px; }
  .count span { width: 17px; height: 18px; border-radius: 6px; background: #dcdfe4; display: grid; place-items: center; }
  .group { display: flex; align-items: center; gap: 6px; padding: 0 7px 0 8px; border-right: 1px solid #bfc2c8; height: 14px; box-sizing: border-box; }
  .group.last { border: 0; }
  .badge { width: 16px; height: 18px; border-radius: 5px; background: #dfe2e8; display: grid; place-items: center; font-size: 12px; letter-spacing: -0.5px; }
  .chev { margin: 0 6px 0 auto; }
  .bar { width: 2px; height: 24px; background: #a0a3a8; margin-left: 7px; }
  .favs { display: flex; margin-left: 6.500px; align-self: stretch; }
  .fav { width: 24.220px; display: grid; place-items: center; position: relative; }
  .sep::after { content: ''; position: absolute; right: 0; top: 8px; width: 1px; height: 20px; background: #c6c9ce; }
  .on { background: #fff; border-radius: 6px 6px 0 0; width: 25px; }
  .newtab { width: 23px; height: 23px; border-radius: 50%; background: #f4f5f7; display: grid; place-items: center; margin-left: 13.500px; }
  .win { display: flex; gap: 24px; margin-left: auto; padding-right: 14px; }
  .win svg { width: 20px; height: 20px; fill: none; stroke: #111; stroke-width: 1.200; }
  .side { display: flex; flex-direction: column; align-items: center; }
  .side > svg { width: 24px; height: 24px; margin-top: 16.100px; fill: none; stroke: #222; stroke-width: 1.300; }
  .side > svg:first-child { margin-top: 8px; }
  .n117 { font-size: 10.500px; font-weight: 600; text-anchor: middle; fill: #111; stroke: none; }
  .side > .dock { margin-top: auto; width: 36px; height: 100px; box-sizing: border-box; padding: 6px; border-radius: 9px; background: #f3f4f7; display: grid; gap: 8px; }
  .side > .alice { width: 28px; height: 28px; margin-top: 12px; stroke: none; }
  .side > .dots { height: 12px; margin: 20px 0 18px; }
  main { background: #fff; border-radius: 7px 7px 0 0; display: flex; flex-direction: column; overflow: hidden; }
  .toolbar { height: 40px; display: flex; align-items: center; position: relative; }
  .nav { display: flex; gap: 20px; padding-left: 12px; }
  .nav svg, .exts svg { width: 24px; height: 24px; }
  .nav svg, .ln { fill: none; stroke: #111; stroke-width: 1.300; }
  .nav .ya { font-size: 13px; text-anchor: middle; fill: #111; stroke: none; }
  .lock { width: 23px; height: 24px; margin-left: 16px; border-radius: 5px; background: #ededed; display: grid; place-items: center; }
  .url { height: 24px; margin-left: 3px; padding: 0 9px 0 8px; border-radius: 5px; background: #ededed; color: #777; display: flex; align-items: center; }
  .title { margin-left: 408.800px; color: #111; }
  .mark { margin-left: auto; }
  .toolbar i { width: 1px; height: 16px; background: #ddd; margin: 0 16px 0 19px; }
  .exts { display: flex; gap: 20px; padding-right: 12px; }
  .canvas { flex: 1; position: relative; }
  .map { position: absolute; inset: 0; }
  .grid { stroke: #c8c8c8; stroke-width: 1.200; fill: none; }
  .grid.soft { stroke: #e4e4e4; stroke-width: 2.300; }
  .frame { fill: none; stroke: #f00; stroke-width: 2.800; }
  .dk { fill: #540000; }
  .nv { fill: #32368f; }
  .ring { fill: none; stroke: #540000; stroke-width: 2.700; }
  .yl { fill: #fac748; stroke: #d9a04a; stroke-width: 0.800; }
  .ybd { fill: none; stroke: #cf9440; stroke-width: 3.900; stroke-linecap: round; }
  .yin { fill: none; stroke: #fac748; stroke-width: 2.600; stroke-linecap: round; }
  .ol { fill: none; stroke: #32368f; stroke-width: 2.500; stroke-linejoin: round; }
  .slash { stroke-width: 1.700; }
  .note { fill: #008080; }
  .digit { font-family: 'Open Sans', sans-serif; }
  .bin { font-family: 'DejaVu Sans Condensed', 'DejaVu Sans', sans-serif; font-stretch: condensed; font-size: 14px; fill: #f00; }
  .hints { position: absolute; left: 19px; top: 712px; color: #3c3f83; }
  .hint { display: flex; align-items: center; gap: 5px; height: 30px; margin-bottom: 5.500px; }
  kbd { background: #efeffe; border-radius: 4px; display: flex; align-items: center; justify-content: center; font: inherit; }
  .palette { position: absolute; left: 720px; top: 889px; width: 432px; height: 75px; box-sizing: border-box; background: #4464ff; border-radius: 18px 18px 0 0; display: flex; gap: 9px; padding: 9px 7px 0; }
  .nav-l { margin-top: 2px; }
  .nav-r { margin: 2px 0 0 auto; }
  .slot { width: 60px; height: 60px; border-radius: 8px; background: #fff; position: relative; flex: none; }
  .slot span { position: absolute; left: 5px; top: 0; font: 700 18px/22px Lato, sans-serif; color: #21c9b8; -webkit-text-stroke: 0.700px #2a5a9c; }
  .speed { position: absolute; left: 1273px; top: 907px; width: 225px; height: 38px; box-sizing: border-box; border-radius: 9px; background: #cbcbcb; display: flex; align-items: center; gap: 43px; padding-left: 19px; }
  .speed i { width: 2px; height: 18px; background: #fff; }
  .speed b { width: 37px; height: 38px; border-radius: 8px; background: #0044ff; margin: 0 -20.500px 0 -15.500px; }
  footer { grid-column: 1 / 3; background: #1e1e1e; display: flex; color: #fff; }
  .start { width: 48px; display: grid; place-items: center; }
  .search { width: 288px; box-sizing: border-box; background: #f2f2f2; border: 1px solid #bbb; color: #222; display: flex; align-items: center; }
  .glass { margin: 0 11px 0 11px; }
  .hill { margin-left: auto; }
  .apps { display: flex; gap: 1px; }
  .app { width: 48px; height: 40px; display: flex; flex-direction: column; align-items: center; }
  .app:first-child { margin-right: 2px; }
  .app svg { margin-top: 1px; }
  .open::after { content: ''; width: 40px; height: 2px; background: #76b9ed; margin-top: -1px; }
  .cur { background: #4b4b4b; }
  .cur::after { width: 48px; }
  .tray { margin-left: auto; display: flex; align-items: center; }
  .tray svg { fill: none; stroke: #fff; stroke-width: 1.100; }
  .tray > svg { margin-right: 7.500px; }
  .tray .fit { fill: #fff; stroke: none; }
  .plus { stroke: #24901c; stroke-width: 2.600; }
  .ink { stroke: #1e1e1e; }
  .bub { fill: #2f2f2f; stroke: #9a9a9a; }
  .lang { margin-left: 2px; width: 36px; }
  .clock { width: 54px; display: grid; justify-items: center; gap: 4px; }
  .tray > .note-ic { margin: 4px 13px 0 18px; }
  .g { font-family: 'Open Sans', sans-serif; text-anchor: middle; }
  .w { fill: #fff; }
  .b { font-weight: 700; }
  .it { font-style: italic; }
  .serif { font-family: 'Liberation Serif', serif; text-anchor: middle; }
  .cjk { font-family: 'Noto Sans CJK JP', sans-serif; text-anchor: middle; }
  .mono { font-family: 'Liberation Mono', monospace; }
</style>
